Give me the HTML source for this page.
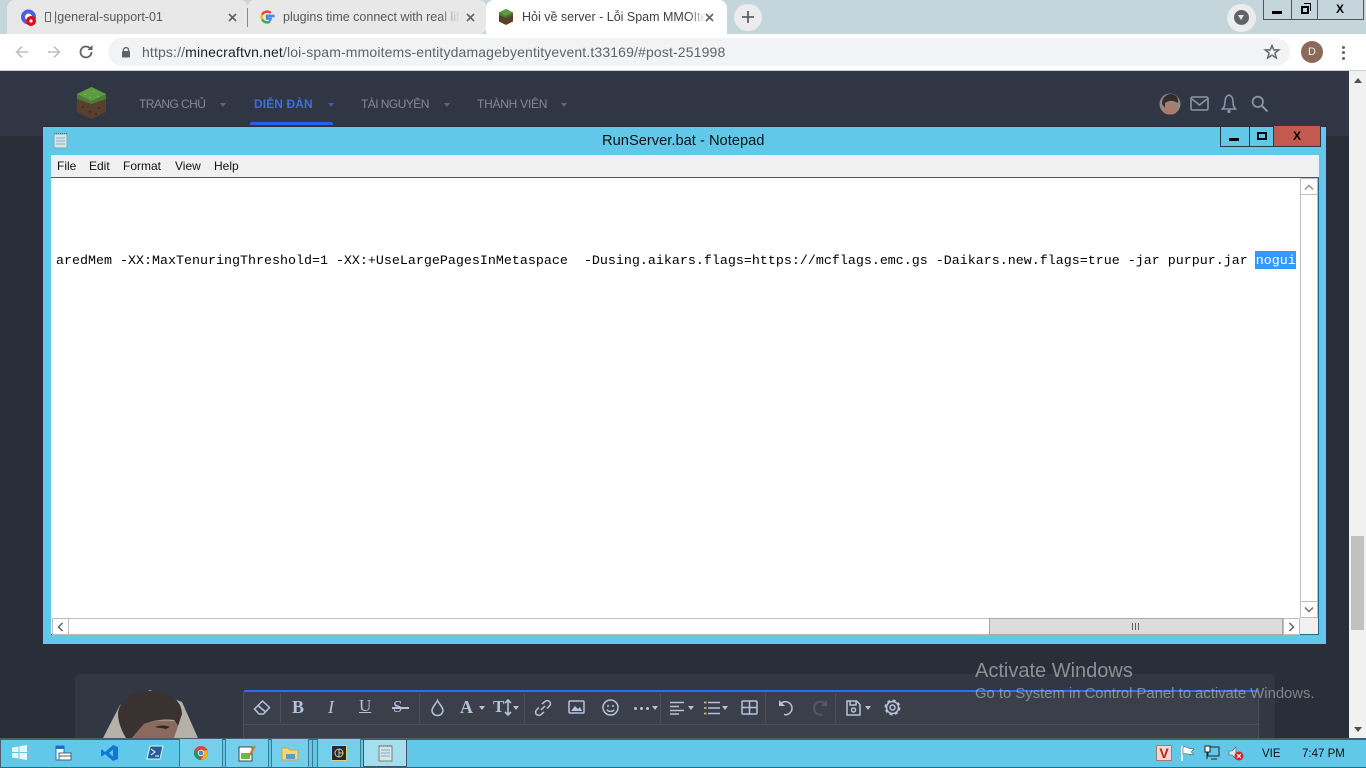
<!DOCTYPE html>
<html><head><meta charset="utf-8"><style>
*{box-sizing:border-box}
html,body{margin:0;padding:0;width:1366px;height:768px;overflow:hidden;background:#2a2e39;font-family:"Liberation Sans",sans-serif}
.a{position:absolute}
.t{position:absolute;white-space:nowrap}
svg{position:absolute;overflow:visible}
.nav{font-size:12px;color:#828a9a;top:97px}
.tri{position:absolute;width:0;height:0;border-left:3.5px solid transparent;border-right:3.5px solid transparent;border-top:4px solid #5f6778}
.ed{fill:none;stroke:#b4c3da;stroke-width:1.5}
.tool{position:absolute;width:0;height:0;border-left:3.5px solid transparent;border-right:3.5px solid transparent;border-top:4px solid #b4c3da}
.sep{position:absolute;width:1px;background:#4a505c;top:693px;height:30px}
.menu{position:absolute;top:159px;font-size:12px;color:#111}
.tb{position:absolute;top:739px;height:28px;background:#74cfec;border-left:1px solid #3a7a92;border-right:1px solid #3a7a92}
</style></head><body>
<div class="a" style="left:0;top:0;width:1366px;height:34px;background:#c4d6dc"></div>
<div class="a" style="left:7px;top:0;width:241px;height:34px;background:#e8e8e8;border-radius:8px 8px 0 0"></div>
<div class="a" style="left:248px;top:0;width:239px;height:34px;background:#e8e8e8;border-radius:6px 8px 8px 0"></div>
<div class="a" style="left:247px;top:8px;width:1px;height:19px;background:#8a8a8a"></div>
<div class="a" style="left:486px;top:0;width:241px;height:34px;background:#fff;border-radius:8px 8px 0 0"></div>
<svg style="left:20px;top:9px" width="18" height="18"><circle cx="8.5" cy="8" r="7.5" fill="#4d5fd8"/><circle cx="8.5" cy="8" r="3.5" fill="#fff"/><circle cx="11" cy="12" r="5" fill="#e30613"/><circle cx="11" cy="12" r="1.6" fill="#fff"/></svg>
<div class="a" style="left:45px;top:12px;width:6px;height:10px;border:1px solid #666"></div>
<div class="t" style="left:54px;top:10px;font-size:12.5px;color:#55585d">|general-support-01</div>
<svg style="left:228px;top:13px" width="9" height="9"><path d="M1 1L8 8M8 1L1 8" stroke="#5f6368" stroke-width="1.6"/></svg>
<svg style="left:259px;top:9px" width="16" height="16" viewBox="0 0 16 16"><path d="M14.5 8.2c0-.5 0-1-.1-1.4H8v2.8h3.7a3.2 3.2 0 0 1-1.4 2.1" fill="none" stroke="#4285f4" stroke-width="2.4"/><path d="M3.2 10.4A5.6 5.6 0 0 0 11 12.6" fill="none" stroke="#34a853" stroke-width="2.4"/><path d="M3.2 5.5a5.6 5.6 0 0 0 0 5" fill="none" stroke="#fbbc05" stroke-width="2.4"/><path d="M3.2 5.6A5.6 5.6 0 0 1 11.8 4" fill="none" stroke="#ea4335" stroke-width="2.4"/></svg>
<div class="t" style="left:283px;top:10px;font-size:12.5px;color:#55585d;width:176px;overflow:hidden">plugins time connect with real life</div>
<div class="a" style="left:440px;top:4px;width:20px;height:26px;background:linear-gradient(90deg,rgba(232,232,232,0),#e8e8e8)"></div>
<svg style="left:466px;top:13px" width="9" height="9"><path d="M1 1L8 8M8 1L1 8" stroke="#5f6368" stroke-width="1.6"/></svg>
<svg style="left:498px;top:8px" width="16" height="18" viewBox="0 0 16 18"><path d="M8 1L15 4.5V13.5L8 17L1 13.5V4.5Z" fill="#5a3f2a"/><path d="M8 1L15 4.5L8 8L1 4.5Z" fill="#5f9a3e"/><path d="M1 4.5L8 8V10L1 7Z" fill="#4f7f35"/><path d="M15 4.5L8 8V10L15 7Z" fill="#456f2e"/></svg>
<div class="t" style="left:522px;top:10px;font-size:12.5px;color:#3c4043;width:184px;overflow:hidden">Hỏi về server - Lỗi Spam MMOItems</div>
<div class="a" style="left:688px;top:4px;width:18px;height:26px;background:linear-gradient(90deg,rgba(255,255,255,0),#fff)"></div>
<svg style="left:705px;top:13px" width="9" height="9"><path d="M1 1L8 8M8 1L1 8" stroke="#5f6368" stroke-width="1.6"/></svg>
<div class="a" style="left:734px;top:4px;width:28px;height:27px;border-radius:14px;background:#ececec"></div>
<svg style="left:741px;top:10px" width="14" height="14"><path d="M7 1V13M1 7H13" stroke="#5f6368" stroke-width="1.8"/></svg>
<div class="a" style="left:1227px;top:4px;width:29px;height:28px;border-radius:15px;background:#ececec"></div>
<div class="a" style="left:1234px;top:10px;width:15px;height:15px;border-radius:8px;background:#5f6368"></div>
<div class="a" style="left:1238px;top:15px;border-left:3.5px solid transparent;border-right:3.5px solid transparent;border-top:5px solid #e6e6e6"></div>
<div class="a" style="left:1263px;top:0;width:101px;height:20px;border:1px solid #555;border-top:0"></div>
<div class="a" style="left:1291px;top:0;width:1px;height:19px;background:#555"></div>
<div class="a" style="left:1317px;top:0;width:1px;height:19px;background:#555"></div>
<div class="a" style="left:1272px;top:11px;width:10px;height:3px;background:#000"></div>
<div class="a" style="left:1301px;top:6px;width:8px;height:8px;border:2px solid #000"></div>
<div class="a" style="left:1304px;top:3px;width:7px;height:8px;border:1px solid #000;border-left:0;border-bottom:0"></div>
<div class="t" style="left:1336px;top:2px;font-size:12px;font-weight:bold;color:#000">X</div>

<div class="a" style="left:0;top:34px;width:1366px;height:36px;background:#fff"></div>
<svg style="left:15px;top:45px" width="14" height="14"><path d="M13 7H1.5M7 1.5L1.5 7L7 12.5" fill="none" stroke="#bdc1c6" stroke-width="1.6"/></svg>
<svg style="left:47px;top:45px" width="14" height="14"><path d="M1 7H12.5M7 1.5L12.5 7L7 12.5" fill="none" stroke="#bdc1c6" stroke-width="1.6"/></svg>
<svg style="left:78px;top:44px" width="16" height="16" viewBox="0 0 16 16"><path d="M13.5 8A5.5 5.5 0 1 1 11.8 4" fill="none" stroke="#5f6368" stroke-width="1.8"/><path d="M9.5 6H14.5V1Z" fill="#5f6368"/></svg>
<div class="a" style="left:108px;top:38px;width:1182px;height:28px;border-radius:14px;background:#f1f3f4"></div>
<svg style="left:121px;top:46px" width="10" height="12"><path d="M2.5 5V3.5a2.6 2.6 0 0 1 5 0V5" fill="none" stroke="#5f6368" stroke-width="1.3"/><rect x="1" y="5" width="8" height="6.5" rx="1" fill="#5f6368"/></svg>
<div class="t" style="left:142px;top:44px;font-size:14px;color:#5f6368;letter-spacing:.14px">https://<span style="color:#202124">minecraftvn.net</span>/loi-spam-mmoitems-entitydamagebyentityevent.t33169/#post-251998</div>
<svg style="left:1264px;top:44px" width="16" height="16" viewBox="0 0 16 16"><path d="M8 1.5L9.9 6H14.8L10.9 9.1L12.3 14L8 11.2L3.7 14L5.1 9.1L1.2 6H6.1Z" fill="none" stroke="#5f6368" stroke-width="1.4"/></svg>
<div class="a" style="left:1301px;top:41px;width:22px;height:22px;border-radius:11px;background:#8b6a5c;color:#eee;font-size:11px;text-align:center;line-height:22px">D</div>
<div class="a" style="left:1342px;top:46px;width:3px;height:3px;border-radius:2px;background:#5f6368"></div>
<div class="a" style="left:1342px;top:51px;width:3px;height:3px;border-radius:2px;background:#5f6368"></div>
<div class="a" style="left:1342px;top:57px;width:3px;height:3px;border-radius:2px;background:#5f6368"></div>
<div class="a" style="left:0;top:70px;width:1366px;height:1px;background:#d0d0d0"></div>

<div class="a" style="left:0;top:71px;width:1349px;height:65px;background:#303643"></div>
<svg style="left:76px;top:86px" width="32" height="34" viewBox="0 0 32 34"><path d="M15.5 1L30 8V26L15.5 33L1 26V8Z" fill="#57402e"/><path d="M15.5 1L30 8V13L15.5 18L1 13V8Z" fill="#4d7a35"/><path d="M15.5 1L30 8L15.5 15L1 8Z" fill="#5e9a42"/><path d="M8 8h2v1h-2zM17 5h2v1h-2zM21 10h2v1h-2zM13 11h2v1h-2z" fill="#79b254"/><path d="M6 20h2v2h-2zM22 21h2v2h-2zM13 25h2v2h-2zM19 27h2v2h-2z" fill="#3f2d20"/></svg>
<div class="t nav" style="left:139px;letter-spacing:-.55px">TRANG CHỦ</div><div class="tri" style="left:220px;top:103px"></div>
<div class="t nav" style="left:254px;color:#3f6fd8;font-weight:bold;letter-spacing:.1px">DIỄN ĐÀN</div><div class="tri" style="left:328px;top:103px;border-top-color:#3f5f9f"></div>
<div class="a" style="left:250px;top:122px;width:83px;height:3px;background:#2962e8;border-radius:2px 2px 0 0"></div>
<div class="t nav" style="left:361px;letter-spacing:-.55px">TÀI NGUYÊN</div><div class="tri" style="left:444px;top:103px"></div>
<div class="t nav" style="left:477px;letter-spacing:-.25px">THÀNH VIÊN</div><div class="tri" style="left:561px;top:103px"></div>
<svg style="left:1159px;top:93px" width="22" height="22" viewBox="0 0 22 22"><circle cx="11" cy="11" r="10.5" fill="#8f8a85"/><path d="M5 20C8 22 15 22 17 20L18 11H5Z" fill="#a87c68"/><path d="M3 11C3 4 8 1 12 1C17 1 20 5 19 10L17 9C13 7 9 8 6 10L6 15Z" fill="#352c2b"/></svg>
<svg style="left:1190px;top:95px" width="20" height="17"><rect x="1" y="2" width="17" height="13" rx="1.5" fill="none" stroke="#8a95a8" stroke-width="1.6"/><path d="M2 4L9.5 10L17 4" fill="none" stroke="#8a95a8" stroke-width="1.6"/></svg>
<svg style="left:1220px;top:93px" width="18" height="21"><path d="M9 2C5.5 3 5 6 5 9C5 12 4.5 14 2.5 16H15.5C13.5 14 13 12 13 9C13 6 12.5 3 9 2Z" fill="none" stroke="#8a95a8" stroke-width="1.6"/><circle cx="9" cy="18.5" r="1.6" fill="#8a95a8"/></svg>
<svg style="left:1251px;top:95px" width="18" height="18"><circle cx="6.8" cy="6.8" r="5.2" fill="none" stroke="#8a95a8" stroke-width="1.7"/><path d="M10.5 10.5L16.5 16.5" stroke="#8a95a8" stroke-width="2"/></svg>
<div class="a" style="left:1349px;top:71px;width:17px;height:667px;background:#f1f1f1"></div>
<div class="a" style="left:1354px;top:78px;border-left:4px solid transparent;border-right:4px solid transparent;border-bottom:5px solid #505050"></div>
<div class="a" style="left:1351px;top:536px;width:13px;height:94px;background:#c1c1c1"></div>
<div class="a" style="left:1354px;top:727px;border-left:4px solid transparent;border-right:4px solid transparent;border-top:5px solid #505050"></div>

<div class="a" style="left:75px;top:674px;width:1200px;height:64px;background:#323744;border-radius:6px 6px 0 0"></div>
<svg style="left:100px;top:688px" width="100" height="50" viewBox="0 0 100 50"><path d="M3 50L20 17L50 2L82 14L98 50Z" fill="#b5b1a9"/><path d="M18 25C20 8 40 2 55 3C72 5 82 14 82 26L78 38L74 32C60 30 50 34 44 36L32 50L26 50C20 40 18 32 18 25Z" fill="#393231"/><path d="M32 50L44 36C52 32 66 32 74 33L78 38L74 50Z" fill="#8a6a5c"/><path d="M55 39C60 37 66 37 70 39L66 41C62 40 58 40 55 39Z" fill="#2f2725"/></svg>
<div class="a" style="left:243px;top:690px;width:1016px;height:48px;background:#3a3f4a;border-top:2px solid #2f6cf0;border-left:1px solid #4a505c;border-right:1px solid #4a505c;border-radius:3px 3px 0 0"></div>
<div class="a" style="left:244px;top:724px;width:1014px;height:1px;background:#4a505c"></div>
<div class="sep" style="left:280px"></div><div class="sep" style="left:419px"></div><div class="sep" style="left:524px"></div><div class="sep" style="left:660px"></div><div class="sep" style="left:765px"></div><div class="sep" style="left:835px"></div>
<svg style="left:253px;top:699px" width="18" height="17"><path class="ed" d="M1.5 10L9.5 2L16.5 8.5L10.5 15H6Z M5 6.5L12.5 13"/></svg>
<div class="t" style="left:292px;top:697px;font:bold 18px 'Liberation Serif',serif;color:#b4c3da">B</div>
<div class="t" style="left:328px;top:697px;font:italic 18px 'Liberation Serif',serif;color:#b4c3da">I</div>
<div class="t" style="left:359px;top:696px;font:17px 'Liberation Serif',serif;color:#b4c3da;text-decoration:underline">U</div>
<div class="t" style="left:393px;top:697px;font:17px 'Liberation Serif',serif;color:#b4c3da">S</div>
<div class="a" style="left:392px;top:707px;width:17px;height:1.5px;background:#b4c3da"></div>
<svg style="left:430px;top:699px" width="15" height="18"><path class="ed" d="M7.5 1.5C6 5 2 8 2 11.5a5.5 5 0 0 0 11 0C13 8 9 5 7.5 1.5Z"/></svg>
<div class="t" style="left:460px;top:697px;font:18px 'Liberation Serif',serif;color:#b4c3da;font-weight:bold">A</div><div class="tool" style="left:479px;top:706px"></div>
<div class="t" style="left:493px;top:697px;font:bold 17px 'Liberation Serif',serif;color:#b4c3da">T</div>
<svg style="left:504px;top:699px" width="8" height="18"><path d="M4 1V16M1 4L4 1L7 4M1 13L4 16L7 13" fill="none" stroke="#b4c3da" stroke-width="1.6"/></svg><div class="tool" style="left:513px;top:706px"></div>
<svg style="left:534px;top:699px" width="18" height="18"><path class="ed" d="M7 11L11 7M8 5L11 2.5a3 3 0 0 1 4.5 4.5L13 9.5M10 13L7 15.5A3 3 0 0 1 2.5 11L5 8.5" stroke-width="1.8"/></svg>
<svg style="left:568px;top:700px" width="17" height="15"><rect x="1" y="1" width="15" height="12" rx="1" class="ed"/><path d="M3 11L7 6L10 9L12 7L14 11Z" fill="#b4c3da"/></svg>
<svg style="left:602px;top:699px" width="17" height="17"><circle cx="8.5" cy="8.5" r="7.5" class="ed"/><circle cx="6" cy="7" r="1" fill="#b4c3da"/><circle cx="11" cy="7" r="1" fill="#b4c3da"/><path class="ed" d="M5 10.5C6 13 11 13 12 10.5"/></svg>
<div class="a" style="left:634px;top:707px;width:3px;height:3px;border-radius:2px;background:#b4c3da;box-shadow:6px 0 #b4c3da,12px 0 #b4c3da"></div><div class="tool" style="left:652px;top:706px"></div>
<svg style="left:670px;top:701px" width="14" height="14"><path d="M0 1.5H14M0 5.5H9M0 9.5H14M0 13H9" stroke="#b4c3da" stroke-width="1.5"/></svg><div class="tool" style="left:688px;top:706px"></div>
<svg style="left:704px;top:701px" width="16" height="14"><path d="M4 1.5H16M4 7H16M4 12.5H16" stroke="#b4c3da" stroke-width="1.5"/><path d="M0 1.5H2.5M0 7H2.5M0 12.5H2.5" stroke="#c9b58a" stroke-width="1.7"/></svg><div class="tool" style="left:722px;top:706px"></div>
<svg style="left:741px;top:700px" width="17" height="15"><rect x="1" y="1" width="15" height="13" rx="1" class="ed"/><path class="ed" d="M8.5 1V14M1 7.5H16"/></svg>
<svg style="left:777px;top:699px" width="18" height="18"><path class="ed" stroke-width="1.8" d="M4 4.5A6.5 6.5 0 1 1 7 15.5"/><path d="M2 1V7H8Z" fill="#b4c3da"/></svg>
<svg style="left:811px;top:699px" width="18" height="18"><path fill="none" stroke="#555b67" stroke-width="1.8" d="M14 4.5A6.5 6.5 0 1 0 11 15.5"/><path d="M16 1V7H10Z" fill="#555b67"/></svg>
<svg style="left:846px;top:700px" width="15" height="16"><path class="ed" d="M1 1H10.5L14 4.5V15H1Z M4 1V5H10V1"/><circle cx="7.5" cy="10" r="2" class="ed"/></svg><div class="tool" style="left:865px;top:706px"></div>
<svg style="left:884px;top:699px" width="17" height="17"><circle cx="8.5" cy="8.5" r="2.5" class="ed"/><circle cx="8.5" cy="8.5" r="6" class="ed" stroke-width="1.4"/><circle cx="8.5" cy="8.5" r="7.2" fill="none" stroke="#b4c3da" stroke-width="1.6" stroke-dasharray="3 2.65"/></svg>

<div class="t" style="left:975px;top:660px;font-size:20px;color:rgba(200,203,208,.62)">Activate Windows</div>
<div class="t" style="left:975px;top:686px;font-size:14.84px;color:rgba(200,203,208,.55)">Go to System in Control Panel to activate Windows.</div>

<!-- notepad -->
<div class="a" style="left:43px;top:126px;width:1283px;height:518px;background:#62c8ea;border-top:1px solid #2a2e39"></div>
<svg style="left:53px;top:132px" width="15" height="17"><rect x="1" y="2" width="13" height="14" fill="#cfe8ee" stroke="#7fa6b0"/><path d="M3 6H12M3 9H12M3 12H12" stroke="#8ab"/><path d="M1 1.5H14" stroke="#666" stroke-dasharray="1 1"/></svg>
<div class="t" style="left:602px;top:133px;font-size:14.7px;color:#111">RunServer.bat - Notepad</div>
<div class="a" style="left:1220px;top:126px;width:54px;height:21px;border:1px solid #2c3a45;border-top:0"></div>
<div class="a" style="left:1249px;top:126px;width:1px;height:21px;background:#2c3a45"></div>
<div class="a" style="left:1274px;top:126px;width:47px;height:21px;background:#c35a50;border:1px solid #2c3a45;border-top:0;border-left:0"></div>
<div class="a" style="left:1229px;top:138px;width:10px;height:3px;background:#000"></div>
<div class="a" style="left:1257px;top:132px;width:10px;height:8px;border:2px solid #000"></div>
<div class="t" style="left:1293px;top:129px;font-size:12px;font-weight:bold;color:#000">X</div>
<div class="a" style="left:51px;top:155px;width:1268px;height:22px;background:#f0f0f0"></div>
<div class="menu" style="left:57px">File</div><div class="menu" style="left:89px">Edit</div><div class="menu" style="left:123px">Format</div><div class="menu" style="left:175px">View</div><div class="menu" style="left:214px">Help</div>
<div class="a" style="left:51px;top:177px;width:1268px;height:458px;background:#fff;border-top:1px solid #1f6795;border-right:1px solid #1f6795;border-bottom:1px solid #1f6795"></div>
<div class="a" style="left:1255px;top:251px;width:41px;height:18px;background:#3399ff"></div>
<div class="t" style="left:56px;top:253px;font:13.33px/18px 'Liberation Mono',monospace;color:#000;white-space:pre">aredMem -XX:MaxTenuringThreshold=1 -XX:+UseLargePagesInMetaspace  -Dusing.aikars.flags=https://mcflags.emc.gs -Daikars.new.flags=true -jar purpur.jar <span style="color:#fff">nogui</span></div>
<div class="a" style="left:1300px;top:178px;width:18px;height:440px;background:#fff;border:1px solid #bdbdbd;border-bottom:0"></div>
<div class="a" style="left:1301px;top:179px;width:16px;height:16px;background:#fff;border-bottom:1px solid #bdbdbd"></div>
<svg style="left:1304px;top:184px" width="10" height="7"><path d="M1 5.5L5 1.5L9 5.5" fill="none" stroke="#909090" stroke-width="1.5"/></svg>
<div class="a" style="left:1300px;top:601px;width:18px;height:17px;background:#fff;border:1px solid #bdbdbd"></div>
<svg style="left:1304px;top:606px" width="10" height="7"><path d="M1 1.5L5 5.5L9 1.5" fill="none" stroke="#707070" stroke-width="1.5"/></svg>
<div class="a" style="left:52px;top:618px;width:1248px;height:17px;background:#fff;border-top:1px solid #bdbdbd;border-bottom:1px solid #bdbdbd"></div>
<div class="a" style="left:52px;top:618px;width:17px;height:17px;background:#fff;border:1px solid #bdbdbd"></div>
<svg style="left:57px;top:622px" width="7" height="10"><path d="M5.5 1L1.5 5L5.5 9" fill="none" stroke="#606060" stroke-width="1.5"/></svg>
<div class="a" style="left:989px;top:618px;width:294px;height:17px;background:#dcdcdc;border:1px solid #a8a8a8"></div>
<div class="a" style="left:1132px;top:623px;width:8px;height:7px;background:repeating-linear-gradient(90deg,#606060 0 1px,transparent 1px 3px)"></div>
<div class="a" style="left:1283px;top:618px;width:17px;height:17px;background:#fff;border:1px solid #bdbdbd"></div>
<svg style="left:1288px;top:622px" width="7" height="10"><path d="M1.5 1L5.5 5L1.5 9" fill="none" stroke="#606060" stroke-width="1.5"/></svg>
<div class="a" style="left:1300px;top:618px;width:18px;height:16px;background:#f0f0f0"></div>

<!-- taskbar -->
<div class="a" style="left:0;top:738px;width:1366px;height:30px;background:#62c8ea;border-top:2px solid #4f5d66;border-bottom:1px solid #4f5d66;border-left:1px solid #4f5d66"></div>
<div class="tb" style="left:179px;width:44px"></div>
<div class="tb" style="left:225px;width:44px"></div>
<div class="tb" style="left:271px;width:38px"></div>
<div class="a" style="left:312px;top:739px;width:1px;height:28px;background:#3a7a92"></div>
<div class="tb" style="left:317px;width:44px"></div>
<div class="tb" style="left:363px;width:44px;background:#a3dfef;border:1px solid #456"></div>
<svg style="left:12px;top:745px" width="15" height="15"><path d="M0 2.5L6.5 1.5V7H0ZM7.5 1.3L15 0V7H7.5ZM0 8H6.5V13.5L0 12.5ZM7.5 8H15V15L7.5 13.7Z" fill="#e8f7fc"/></svg>
<svg style="left:55px;top:745px" width="17" height="16"><path d="M1 1H9V15H1Z" fill="#fff" stroke="#1b6fc9"/><rect x="1" y="1" width="8" height="3" fill="#1b6fc9"/><rect x="4" y="8" width="12" height="7" fill="#fff" stroke="#48606e"/><path d="M4 11H16" stroke="#48606e"/></svg>
<svg style="left:101px;top:745px" width="17" height="16" viewBox="0 0 17 16"><path d="M12 0L17 2V14L12 16L4 9L1 11.5L0 11V5L1 4.5L4 7ZM12 4.5L8 8L12 11.5Z" fill="#0f78d4"/></svg>
<svg style="left:147px;top:745px" width="16" height="15"><path d="M3 1H16L13 14H0Z" fill="#2a5c9a" stroke="#cfe"/><path d="M4 4L8 7L4 10M8 11H12" fill="none" stroke="#fff"/></svg>
<svg style="left:194px;top:746px" width="14" height="14" viewBox="0 0 14 14"><circle cx="7" cy="7" r="7" fill="#db4437"/><path d="M7 14A7 7 0 0 1 1 3.5L4 8.5Z" fill="#0f9d58"/><path d="M7 14A7 7 0 0 0 13.5 4.5H7L10 8.5Z" fill="#f4b400"/><circle cx="7" cy="7" r="3.2" fill="#fff"/><circle cx="7" cy="7" r="2.4" fill="#4285f4"/></svg>
<svg style="left:239px;top:745px" width="17" height="16"><rect x="0" y="2" width="13" height="14" fill="#fff" stroke="#444"/><rect x="2" y="8" width="9" height="6" fill="#6bb84a"/><path d="M10 11L16 1" stroke="#d87a1c" stroke-width="2"/></svg>
<svg style="left:282px;top:747px" width="16" height="13"><path d="M0 1H6L8 3H16V13H0Z" fill="#f3d676" stroke="#c9a94a"/><rect x="4" y="7" width="9" height="5" fill="#5c9bd1"/></svg>
<div class="a" style="left:331px;top:745px;width:16px;height:16px;background:#1b2a3d;border:1px solid #e6cf72"></div>
<svg style="left:334px;top:748px" width="10" height="10"><circle cx="5" cy="5" r="4" fill="none" stroke="#e6cf72"/><path d="M5 1V9M5 5H9" stroke="#e6cf72"/></svg>
<svg style="left:378px;top:745px" width="15" height="16"><rect x="1" y="1" width="13" height="15" fill="#cfe7ee" stroke="#8a7e66"/><path d="M3 5H12M3 8H12M3 11H12" stroke="#8ab"/><path d="M1 1H14" stroke="#555" stroke-dasharray="1 1"/></svg>
<div class="a" style="left:1156px;top:745px;width:16px;height:16px;background:#f4d8d0;border:1px solid #a77;color:#b3261e;font:bold 14px/14px 'Liberation Sans',sans-serif;text-align:center">V</div>
<svg style="left:1180px;top:745px" width="16" height="17"><path d="M2 1V16" stroke="#fff" stroke-width="1.5"/><path d="M3 2C7 1 7 4 14 4L11 7L14 9C8 10 7 8 3 9Z" fill="#fff" stroke="#333" stroke-width=".5"/></svg>
<svg style="left:1204px;top:745px" width="16" height="16"><rect x="4" y="2" width="11" height="9" fill="none" stroke="#222"/><rect x="1" y="1" width="5" height="6" fill="#fff" stroke="#222"/><path d="M3 7V14M7 14H13" stroke="#222"/></svg>
<svg style="left:1228px;top:745px" width="16" height="17"><path d="M1 6H4L8 2V14L4 10H1Z" fill="#dfe5e8" stroke="#555" stroke-width=".6"/><circle cx="11" cy="11" r="4.5" fill="#d3232c"/><path d="M9 9L13 13M13 9L9 13" stroke="#fff" stroke-width="1.2"/></svg>
<div class="t" style="left:1262px;top:748px;font-size:11.5px;color:#111">VIE</div>
<div class="t" style="left:1302px;top:748px;font-size:11.5px;color:#111">7:47 PM</div>
</body></html>
